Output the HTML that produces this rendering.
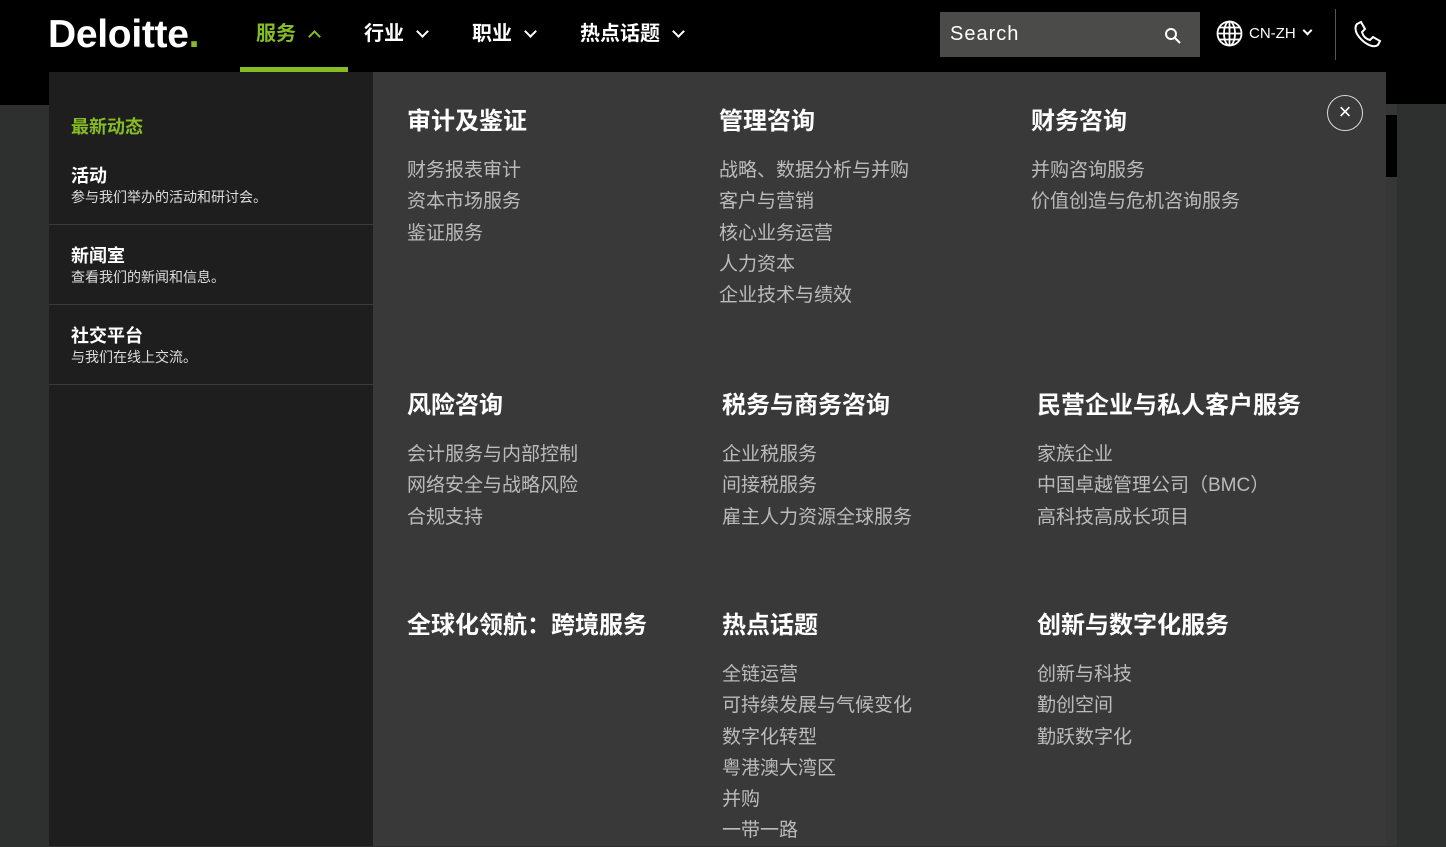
<!DOCTYPE html>
<html><head><meta charset="utf-8"><style>
*{margin:0;padding:0;box-sizing:border-box}
body{width:1446px;height:846px;overflow:hidden;background:#2e302f;font-family:"Liberation Sans","Noto Sans CJK SC",sans-serif;position:relative}
.hdr{position:absolute;left:0;top:0;width:1446px;height:72px;background:#000}
.band{position:absolute;top:72px;height:33px;background:#000}
.logo{position:absolute;left:48px;top:12px;color:#fff;font-weight:bold;font-size:39px;letter-spacing:-0.3px;line-height:45px}
.logo span{color:#86bc25}
.nav{position:absolute;top:17px;color:#fff;font-weight:bold;font-size:20px}
.nav.g{color:#86bc25}
.chev{display:inline-block;width:9px;height:9px;border-right:2.5px solid currentColor;border-bottom:2.5px solid currentColor;transform:rotate(45deg);margin-left:14px;position:relative;top:-4px}
.chev.up{transform:rotate(-135deg);top:1px}
.uline{position:absolute;left:240px;top:67px;width:108px;height:5px;background:#86bc25}
.search{position:absolute;left:940px;top:12px;width:260px;height:45px;background:#4b4b4a;color:#fff;font-size:20px;padding:11px 0 0 10px;letter-spacing:1px}
.left{position:absolute;left:49px;top:72px;width:324px;height:774px;background:#1e1e1e}
.right{position:absolute;left:373px;top:72px;width:1013px;height:774px;background:#393939}
.lh{position:absolute;left:71px;top:113px;color:#86bc25;font-weight:bold;font-size:18px}
.li{position:absolute;left:49px;width:324px;height:80px;border-bottom:1px solid #3a3a3a;padding:20px 0 0 22px}
.li b{display:block;color:#fff;font-size:18px;line-height:22px}
.li span{display:block;color:#ddd;font-size:14px;line-height:20px}
.col{position:absolute}
.col h3{color:#fff;font-size:24px;font-weight:bold;line-height:30px;margin-bottom:18px}
.col a{display:block;color:#bbb;font-size:19px;line-height:31.3px;text-decoration:none}
.close{position:absolute;left:1327px;top:95px;width:36px;height:36px;border:1.5px solid #ddd;border-radius:50%;color:#fff;font-size:22px;text-align:center;line-height:32px}
</style></head><body>
<div class="hdr"></div>
<div class="band" style="left:0;width:49px"></div>
<div class="band" style="left:1386px;width:60px;top:72px;height:32px"></div>
<div style="position:absolute;left:1386px;top:104px;width:11px;height:742px;background:#363636"></div>
<div style="position:absolute;left:1386px;top:115px;width:11px;height:62px;background:#000"></div>
<div class="logo">Deloitte<span>.</span></div>
<div class="nav g" style="left:256px">服务<span class="chev up"></span></div>
<div class="uline"></div>
<div class="nav" style="left:364px">行业<span class="chev"></span></div>
<div class="nav" style="left:472px">职业<span class="chev"></span></div>
<div class="nav" style="left:580px">热点话题<span class="chev"></span></div>
<div class="search">Search
<svg style="position:absolute;left:224px;top:15px" width="18" height="18" viewBox="0 0 18 18"><circle cx="7" cy="7" r="5" fill="none" stroke="#fff" stroke-width="2"/><line x1="11" y1="11" x2="16" y2="16" stroke="#fff" stroke-width="2"/></svg></div>
<svg style="position:absolute;left:1216px;top:20px" width="27" height="27" viewBox="0 0 27 27" fill="none" stroke="#fff" stroke-width="1.8"><circle cx="13.5" cy="13.5" r="12"/><ellipse cx="13.5" cy="13.5" rx="5.5" ry="12"/><line x1="1.5" y1="13.5" x2="25.5" y2="13.5"/><line x1="3.5" y1="7.5" x2="23.5" y2="7.5"/><line x1="3.5" y1="19.5" x2="23.5" y2="19.5"/><line x1="13.5" y1="1.5" x2="13.5" y2="25.5"/></svg>
<div style="position:absolute;left:1249px;top:25px;color:#fff;font-size:15px">CN-ZH<span class="chev" style="width:7px;height:7px;margin-left:8px;border-width:2px"></span></div>
<div style="position:absolute;left:1335px;top:9px;width:1px;height:51px;background:#555"></div>
<svg style="position:absolute;left:1352px;top:20px" width="30" height="30" viewBox="0 0 30 30" fill="none" stroke="#fff" stroke-width="2"><path d="M5 4 L9 2 L13 9 L10 12 C11 16 14 19 18 20 L21 17 L28 21 L26 25 C20 29 10 22 5 14 C3 10 3 6 5 4 Z"/></svg>
<div class="left"></div>
<div class="right"></div>
<div class="lh">最新动态</div>
<div class="li" style="top:145px"><b>活动</b><span>参与我们举办的活动和研讨会。</span></div>
<div class="li" style="top:225px"><b>新闻室</b><span>查看我们的新闻和信息。</span></div>
<div class="li" style="top:305px"><b>社交平台</b><span>与我们在线上交流。</span></div>
<div class="close">×</div>
<div class="col" style="left:407px;top:107px"><h3>审计及鉴证</h3><a>财务报表审计</a><a>资本市场服务</a><a>鉴证服务</a></div>
<div class="col" style="left:719px;top:107px"><h3>管理咨询</h3><a>战略、数据分析与并购</a><a>客户与营销</a><a>核心业务运营</a><a>人力资本</a><a>企业技术与绩效</a></div>
<div class="col" style="left:1031px;top:107px"><h3>财务咨询</h3><a>并购咨询服务</a><a>价值创造与危机咨询服务</a></div>
<div class="col" style="left:407px;top:391px"><h3>风险咨询</h3><a>会计服务与内部控制</a><a>网络安全与战略风险</a><a>合规支持</a></div>
<div class="col" style="left:722px;top:391px"><h3>税务与商务咨询</h3><a>企业税服务</a><a>间接税服务</a><a>雇主人力资源全球服务</a></div>
<div class="col" style="left:1037px;top:391px"><h3>民营企业与私人客户服务</h3><a>家族企业</a><a>中国卓越管理公司（BMC）</a><a>高科技高成长项目</a></div>
<div class="col" style="left:407px;top:611px"><h3>全球化领航：跨境服务</h3></div>
<div class="col" style="left:722px;top:611px"><h3>热点话题</h3><a>全链运营</a><a>可持续发展与气候变化</a><a>数字化转型</a><a>粤港澳大湾区</a><a>并购</a><a>一带一路</a></div>
<div class="col" style="left:1037px;top:611px"><h3>创新与数字化服务</h3><a>创新与科技</a><a>勤创空间</a><a>勤跃数字化</a></div>
</body></html>
